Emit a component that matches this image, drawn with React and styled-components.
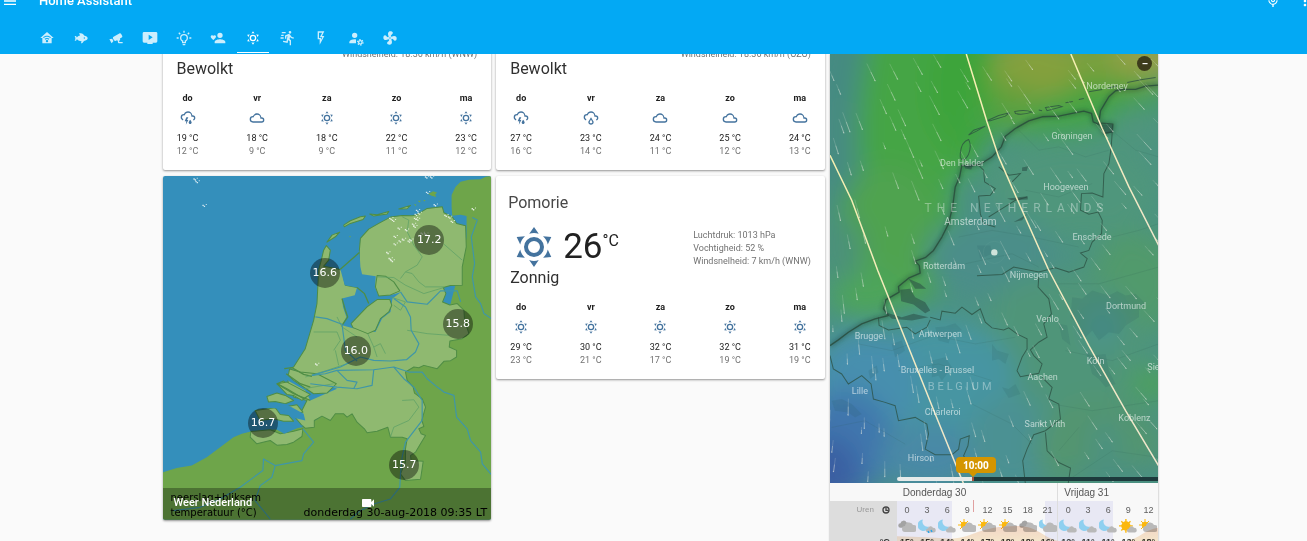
import React from 'react';
import styled, { createGlobalStyle, css } from 'styled-components';
import { MdMenu, MdMicNone, MdMoreVert, MdVideocam } from 'react-icons/md';

const GlobalStyle = createGlobalStyle`
  *, *::before, *::after { box-sizing: border-box; }
  body {
    margin: 0;
    background: #fafafa;
    color: #212121;
    font-family: Roboto, "Liberation Sans", sans-serif;
    font-size: 9px;
  }
`;

/* ---------- icons ---------- */

const CLOUD_TOP =
  'M4.5,13.59C5,13.87 5.14,14.5 4.87,14.96C4.59,15.44 4,15.6 3.5,15.33V15.33C2,14.47 1,12.85 1,11A5,5 0 0,1 6,6C7,3.65 9.3,2 12,2C15.43,2 18.24,4.66 18.5,8.03L19,8A4,4 0 0,1 23,12C23,13.5 22.2,14.77 21,15.46C20.5,15.73 19.91,15.57 19.63,15.09C19.36,14.61 19.5,14 20,13.72V13.73C20.6,13.39 21,12.74 21,12A2,2 0 0,0 19,10H17V9A5,5 0 0,0 12,4C9.5,4 7.45,5.82 7.06,8.19C6.73,8.07 6.37,8 6,8A3,3 0 0,0 3,11C3,12.11 3.6,13.08 4.5,13.59';

const ICONS = {
  sunny:
    'M12,7A5,5 0 0,1 17,12A5,5 0 0,1 12,17A5,5 0 0,1 7,12A5,5 0 0,1 12,7M12,9A3,3 0 0,0 9,12A3,3 0 0,0 12,15A3,3 0 0,0 15,12A3,3 0 0,0 12,9M12,2L14.39,5.42C13.65,5.15 12.84,5 12,5C11.16,5 10.35,5.15 9.61,5.42L12,2M3.34,7L7.5,6.65C6.9,7.16 6.36,7.78 5.94,8.5C5.5,9.24 5.25,10 5.11,10.79L3.34,7M3.36,17L5.12,13.23C5.26,14 5.53,14.78 5.95,15.5C6.37,16.24 6.91,16.86 7.5,17.37L3.36,17M20.65,7L18.88,10.79C18.74,10 18.47,9.23 18.05,8.5C17.63,7.78 17.1,7.15 16.5,6.64L20.65,7M20.64,17L16.5,17.36C17.09,16.85 17.62,16.22 18.04,15.5C18.46,14.77 18.73,14 18.87,13.21L20.64,17M12,22L9.59,18.56C10.33,18.83 11.14,19 12,19C12.82,19 13.63,18.83 14.37,18.56L12,22Z',
  cloudy:
    'M6,19A5,5 0 0,1 1,14A5,5 0 0,1 6,9C7,6.65 9.3,5 12,5C15.43,5 18.24,7.66 18.5,11.03L19,11A4,4 0 0,1 23,15A4,4 0 0,1 19,19H6M19,13H17V12A5,5 0 0,0 12,7C9.5,7 7.45,8.82 7.06,11.19C6.73,11.07 6.37,11 6,11A3,3 0 0,0 3,14A3,3 0 0,0 6,17H19A2,2 0 0,0 21,15A2,2 0 0,0 19,13Z',
  storm:
    CLOUD_TOP +
    'M9.5,11H12.5L10.5,15H12.5L8.75,22L9.5,17H7L9.5,11M17.5,18.67C17.5,19.96 16.5,21 15.25,21C14,21 13,19.96 13,18.67C13,17.12 15.25,14.5 15.25,14.5C15.25,14.5 17.5,17.12 17.5,18.67Z',
  rainy:
    CLOUD_TOP +
    'M14.83,15.67C16.39,17.23 16.39,19.5 14.83,21.08C14.05,21.86 13,22 12,22C11,22 9.95,21.86 9.17,21.08C7.61,19.5 7.61,17.23 9.17,15.67L12,11L14.83,15.67M13.41,16.69L12,14.25L10.59,16.69C9.8,17.5 9.8,18.7 10.59,19.5C11,19.93 11.5,20 12,20C12.5,20 13,19.93 13.41,19.5C14.2,18.7 14.2,17.5 13.41,16.69Z',
  home:
    'M12,3L2,12H5V20H19V12H22L12,3M12,8.5C14.34,8.5 16.46,9.43 18,10.94L16.8,12.12C15.58,10.91 13.88,10.17 12,10.17C10.12,10.17 8.42,10.91 7.2,12.12L6,10.94C7.54,9.43 9.66,8.5 12,8.5M12,11.83C13.4,11.83 14.67,12.39 15.6,13.3L14.4,14.47C13.79,13.87 12.94,13.5 12,13.5C11.06,13.5 10.21,13.87 9.6,14.47L8.4,13.3C9.33,12.39 10.6,11.83 12,11.83M12,15.17C12.94,15.17 13.7,15.91 13.7,16.83C13.7,17.75 12.94,18.5 12,18.5C11.06,18.5 10.3,17.75 10.3,16.83C10.3,15.91 11.06,15.17 12,15.17Z',
  fish:
    'M12,20L12.76,17C9.5,16.79 6.59,15.4 5.75,13.58C5.66,14.06 5.53,14.5 5.33,14.83C4.67,16 3.33,16 2,16C3.1,16 3.5,14.43 3.5,12.5C3.5,10.57 3.1,9 2,9C3.33,9 4.67,9 5.33,10.17C5.53,10.5 5.66,10.94 5.75,11.42C6.4,10 8.32,8.85 10.66,8.32L9,5C11,5 13,5 14.33,5.67C15.46,6.23 16.11,7.27 16.69,8.38C19.61,9.08 22,10.66 22,12.5C22,14.38 19.5,16 16.5,16.66C15.67,17.76 14.86,18.78 14.17,19.33C13.33,20 12.67,20 12,20M17,11A1,1 0 0,0 16,12A1,1 0 0,0 17,13A1,1 0 0,0 18,12A1,1 0 0,0 17,11Z',
  cctv:
    'M18.15,4.94C17.77,4.91 17.37,5 17,5.2L8.35,10.2C7.39,10.76 7.07,12 7.62,12.94L9.12,15.53C9.67,16.5 10.89,16.82 11.85,16.27L13.65,15.23C13.92,15.69 14.32,16.06 14.81,16.27V18.04C14.81,19.13 15.7,20 16.81,20H22V18.04H16.81V16.27C17.72,15.87 18.31,14.97 18.31,14C18.31,13.54 18.19,13.11 17.97,12.73L20.5,11.27C21.47,10.71 21.8,9.5 21.24,8.53L19.74,5.94C19.4,5.34 18.79,5 18.15,4.94M6.22,13.17L2,13.87L2.75,15.17L4.75,18.63L5.5,19.93L8.22,16.63L6.22,13.17Z',
  tv:
    'M21,3H3C1.89,3 1,3.89 1,5V17A2,2 0 0,0 3,19H8V21H16V19H21A2,2 0 0,0 23,17V5A2,2 0 0,0 21,3M16,11L10,15V7Z',
  bulb:
    'M20,11H23V13H20V11M1,11H4V13H1V11M13,1V4H11V1H13M4.92,3.5L7.05,5.64L5.63,7.05L3.5,4.93L4.92,3.5M16.95,5.63L19.07,3.5L20.5,4.93L18.37,7.05L16.95,5.63M12,6A6,6 0 0,1 18,12C18,14.22 16.79,16.16 15,17.2V19A1,1 0 0,1 14,20H10A1,1 0 0,1 9,19V17.2C7.21,16.16 6,14.22 6,12A6,6 0 0,1 12,6M14,21V22A1,1 0 0,1 13,23H11A1,1 0 0,1 10,22V21H14M11,18H13V15.87C14.73,15.43 16,13.86 16,12A4,4 0 0,0 12,8A4,4 0 0,0 8,12C8,13.86 9.27,15.43 11,15.87V18Z',
  heart:
    'M15,14C12.3,14 7,15.3 7,18V20H23V18C23,15.3 17.7,14 15,14M15,12A4,4 0 0,0 19,8A4,4 0 0,0 15,4A4,4 0 0,0 11,8A4,4 0 0,0 15,12M5,15L4.4,14.5C2.4,12.6 1,11.4 1,9.9C1,8.7 2,7.7 3.2,7.7C3.9,7.7 4.6,8 5,8.5C5.4,8 6.1,7.7 6.8,7.7C8,7.7 9,8.6 9,9.9C9,11.4 7.6,12.6 5.6,14.5L5,15Z',
  run:
    'M16.5,5.5A2,2 0 0,0 18.5,3.5A2,2 0 0,0 16.5,1.5A2,2 0 0,0 14.5,3.5A2,2 0 0,0 16.5,5.5M12.9,19.4L13.9,15L16,17V23H18V15.5L15.9,13.5L16.5,10.5C17.89,12.09 19.89,13 22,13V11C20.24,11.03 18.6,10.11 17.7,8.6L16.7,7C16.34,6.4 15.7,6 15,6C14.7,6 14.5,6.1 14.2,6.1L9,8.3V13H11V9.6L12.8,8.9L11.2,17L6.3,16L5.9,18L12.9,19.4M4,9A1,1 0 0,1 3,8A1,1 0 0,1 4,7H7V9H4M5,5A1,1 0 0,1 4,4A1,1 0 0,1 5,3H10V5H5M3,13A1,1 0 0,1 2,12A1,1 0 0,1 3,11H7V13H3Z',
  flash: 'M7,2H17L13.5,9H17L10,22V14H7V2M9,4V12H12V14.66L14,11H10.24L13.76,4H9Z',
  account:
    'M10,4A4,4 0 0,0 6,8A4,4 0 0,0 10,12A4,4 0 0,0 14,8A4,4 0 0,0 10,4M10,14C5.58,14 2,15.79 2,18V20H12V14.1C11.4,14 10.6,14 10,14Z',
  fan:
    'M12,11A1,1 0 0,0 11,12A1,1 0 0,0 12,13A1,1 0 0,0 13,12A1,1 0 0,0 12,11M12.5,2C17,2 17.11,5.57 14.75,6.75C13.76,7.24 13.32,8.29 13.13,9.22C13.61,9.42 14.03,9.73 14.35,10.13C18.05,8.13 22.03,8.92 22.03,12.5C22.03,17 18.46,17.1 17.28,14.73C16.78,13.74 15.72,13.3 14.79,13.11C14.59,13.59 14.28,14 13.88,14.34C15.87,18.03 15.08,22 11.5,22C7,22 6.91,18.42 9.27,17.24C10.25,16.75 10.69,15.71 10.89,14.79C10.4,14.59 9.97,14.27 9.65,13.87C5.96,15.85 2,15.07 2,11.5C2,7 5.56,6.89 6.74,9.26C7.24,10.25 8.29,10.68 9.22,10.87C9.41,10.39 9.73,9.97 10.14,9.65C8.15,5.96 8.94,2 12.5,2Z',
};

const Glyph = styled.svg`
  display: block;
  flex: none;
  width: ${(p) => p.$size}px;
  height: ${(p) => p.$size}px;
  fill: currentColor;
`;

function Icon({ name, size = 16 }) {
  return (
    <Glyph viewBox="0 0 24 24" $size={size} aria-hidden="true">
      <path d={ICONS[name]} fillRule="evenodd" />
      {name === 'account' && (
        <g fill="none" stroke="currentColor">
          <circle cx="18.5" cy="18.5" r="5.4" stroke="#03a9f4" strokeWidth="2" />
          <circle cx="18.5" cy="18.5" r="2.6" strokeWidth="2" />
          <circle cx="18.5" cy="18.5" r="4.2" strokeWidth="1.6" strokeDasharray="2.2 2.2" />
        </g>
      )}
    </Glyph>
  );
}

/* ---------- header ---------- */

const Page = styled.div`
  display: flex;
  flex-direction: column;
  height: 100vh;
  overflow: hidden;
`;

const Header = styled.header`
  position: relative;
  z-index: 2;
  flex: none;
  padding-bottom: 1px;
  background: #03a9f4;
  color: #fff;
  overflow: hidden;
`;

const Toolbar = styled.div`
  display: flex;
  align-items: center;
  height: 42px;
  margin-top: -20px;
  padding-left: 2px;
`;

const Title = styled.h1`
  flex: 1;
  margin: 0 0 0 21px;
  font-size: 13px;
  font-weight: 500;
  line-height: 20px;
`;

const ToolButton = styled.button`
  display: flex;
  margin: 0;
  padding: 0;
  border: 0;
  background: none;
  color: inherit;
  font-size: 16px;
  cursor: pointer;
`;

const ToolActions = styled.div`
  display: flex;
  gap: 16px;
  margin-right: -6px;
`;

const Tabs = styled.nav`
  display: flex;
  justify-content: space-between;
  width: 375px;
  margin-left: 31px;
`;

const Tab = styled.a`
  display: flex;
  align-items: center;
  justify-content: center;
  width: 32px;
  height: 31px;
  padding-top: 2px;
  border-bottom: 1px solid ${(p) => (p.$active ? '#fff' : 'transparent')};
  color: ${(p) => (p.$active ? '#fff' : 'rgba(255, 255, 255, 0.8)')};
`;

/* ---------- card grid ---------- */

const Main = styled.main`
  flex: 1;
  min-height: 0;
  overflow: hidden;
`;

const Columns = styled.div`
  display: grid;
  grid-template-columns: repeat(3, minmax(0, 1fr));
  align-items: start;
  gap: 5px;
  max-width: 1010px;
  margin: 0 auto;
  padding-left: 14px;
`;

const Column = styled.div`
  display: flex;
  flex-direction: column;
  gap: 6px;
  margin-top: ${(p) => (p.$scrolled ? '-11px' : '0')};
`;

const cardLook = css`
  background: #fff;
  border-radius: 2px;
  box-shadow: 0 1px 2px rgba(0, 0, 0, 0.3), 0 1px 3px rgba(0, 0, 0, 0.14);
`;

const Card = styled.section`
  ${cardLook}
  padding: ${(p) => (p.$named ? '11px' : '3px')} 14px 12px;
`;

const Place = styled.h2`
  margin: 0 -2px 5px;
  color: #484848;
  font-size: 16px;
  font-weight: 400;
  line-height: 32px;
`;

const Now = styled.div`
  display: flex;
  align-items: center;
  justify-content: flex-end;
  height: ${(p) => (p.$full ? '45px' : '14px')};
`;

const NowIcon = styled.span`
  color: #44739e;
`;

const NowTemp = styled.div`
  display: flex;
  flex: 1;
  margin-left: 5px;
  font-size: 35px;
  line-height: 44px;
`;

const Unit = styled.span`
  font-size: 16px;
  line-height: 32px;
`;

const Attributes = styled.div`
  padding-top: 3px;
  color: #727272;
  font-size: 9px;
  line-height: 13px;
`;

const Condition = styled.div`
  margin-bottom: 14px;
  font-size: 16px;
  line-height: 18px;
  color: #303030;
`;

const Forecast = styled.div`
  display: flex;
  justify-content: space-between;
`;

const Day = styled.div`
  display: flex;
  flex-direction: column;
  align-items: center;
  width: 22px;
  font-size: 9px;
  line-height: 13px;
  white-space: nowrap;
`;

const DayName = styled.span`
  font-weight: 700;
`;

const DayIcon = styled.span`
  margin: 5px 0 6px;
  color: #44739e;
`;

const Low = styled.span`
  color: #727272;
`;

const DAYS = ['do', 'vr', 'za', 'zo', 'ma'];

function WeatherCard({ place, temp, attributes, condition, forecast }) {
  return (
    <Card $named={Boolean(place)}>
      {place && <Place>{place}</Place>}
      <Now $full={Boolean(place)}>
        {temp && (
          <>
            <NowIcon><Icon name="sunny" size={48} /></NowIcon>
            <NowTemp>{temp}<Unit>°C</Unit></NowTemp>
          </>
        )}
        <Attributes>
          {attributes.map((line) => <div key={line}>{line}</div>)}
        </Attributes>
      </Now>
      <Condition>{condition}</Condition>
      <Forecast>
        {forecast.map(([icon, high, low], i) => (
          <Day key={DAYS[i]}>
            <DayName>{DAYS[i]}</DayName>
            <DayIcon><Icon name={icon} /></DayIcon>
            <span>{high} °C</span>
            <Low>{low} °C</Low>
          </Day>
        ))}
      </Forecast>
    </Card>
  );
}

/* ---------- camera card ---------- */

const Camera = styled.section`
  ${cardLook}
  position: relative;
  overflow: hidden;
  font-family: "DejaVu Sans", sans-serif;
`;

const Drawing = styled.svg`
  display: block;
  width: 100%;
  height: auto;
`;

const Pin = styled.span`
  position: absolute;
  left: ${(p) => p.$x}%;
  top: ${(p) => p.$y}%;
  width: 30px;
  height: 30px;
  border-radius: 50%;
  background: rgba(0, 0, 0, 0.4);
  color: #fff;
  font-size: 11px;
  line-height: 30px;
  text-align: center;
  transform: translate(-50%, -50%);
`;

const Legend = styled.div`
  position: absolute;
  left: 8px;
  right: 4px;
  bottom: 0;
  display: flex;
  align-items: flex-end;
  justify-content: space-between;
  color: #000;
  font-size: 10px;
  line-height: 15px;
`;

const Stamp = styled.div`
  font-size: 11px;
`;

const CameraFooter = styled.div`
  position: absolute;
  left: 0;
  right: 0;
  bottom: 0;
  display: flex;
  align-items: center;
  height: 32px;
  padding: 0 11px 2px;
  background: rgba(0, 0, 0, 0.3);
  color: #fff;
  font-family: Roboto, sans-serif;
  font-size: 11px;
  font-weight: 500;
`;

const CameraName = styled.span`
  flex: 1;
`;

const CameraIcon = styled.span`
  display: flex;
  flex: 1;
  margin-left: 66px;
  font-size: 16px;
`;

const PINS = [
  ['17.2', 808, 209],
  ['16.6', 495, 307],
  ['15.8', 893, 460],
  ['16.0', 588, 542],
  ['16.7', 310, 757],
  ['15.7', 733, 884],
];

const SPECKS = [
  [104, 28], [110, 36], [131, 107], [770, 122], [775, 130], [766, 134], [764, 146], [770, 148], [758, 163],
  [762, 170], [690, 146], [698, 152], [737, 180], [715, 175], [703, 200], [718, 213], [728, 208], [745, 214],
  [750, 210], [703, 222], [681, 248], [688, 266], [694, 272], [800, 68], [797, 22], [812, 22], [855, 137],
  [866, 142], [874, 155], [823, 105], [937, 117], [784, 190], [795, 192], [468, 582],
];

function NetherlandsMap() {
  return (
    <Drawing viewBox="9 18 984 1029" aria-hidden="true">
      <rect x="9" y="18" width="984" height="1029" fill="#348fbb" />
      <path
        fill="#6ea54a"
        d="M9,905 L50,892 95,885 140,860 180,830 220,800 245,790 272,783 L430,770 820,540 870,400 912,240 918,200 918,138 900,134 875,137 873,110 873,75 885,50 900,35 925,29 960,28 975,20 993,18 V1047 H9Z"
      />
      <g fill="#8fb970" stroke="#4f8d45" strokeWidth="3" strokeLinejoin="round">
        <path d="M597,240 L600,205 625,177 655,160 690,141 725,136 755,137 770,133 800,115 845,110 850,128 875,140 888,160 915,167 917,230 905,290 905,345 870,346 848,352 856,370 846,395 868,404 890,400 910,420 912,450 925,490 905,505 868,512 866,530 888,540 888,560 870,571 850,573 830,595 790,585 775,592 760,590 735,605 740,630 758,650 762,668 785,685 795,710 784,750 790,768 775,775 782,790 795,795 780,820 765,845 750,855 752,870 788,872 784,900 780,926 735,930 720,910 735,875 735,835 740,805 725,800 690,800 682,770 650,782 620,787 612,775 590,755 575,730 560,740 550,730 525,730 510,750 485,737 462,750 462,770 435,773 425,765 400,735 425,720 440,690 400,680 385,640 375,600 400,590 435,535 460,450 470,400 475,300 483,270 490,240 498,226 510,240 505,270 490,288 530,296 545,300 555,345 590,352 597,300 Z" />
        <path d="M350,640 L370,632 400,655 440,678 425,690 400,675 380,672Z" />
        <path d="M320,678 L350,668 375,675 400,690 375,700 345,693 325,695Z" />
        <path d="M380,708 L410,703 428,725 400,728Z" />
        <path d="M285,720 L345,712 360,732 385,735 400,752 370,752 340,745 300,750Z" />
        <path d="M272,783 L330,778 360,790 400,782 428,775 425,798 400,815 380,822 350,824 330,810 290,820 270,800Z" />
        <path d="M550,165 L570,152 600,140 615,138 608,148 570,160 552,170Z M628,132 L650,134 685,124 680,132 640,138Z M500,216 L515,195 538,186 525,200Z M715,117 L750,106 740,116Z" />
      </g>
      <path fill="#6ea54a" d="M803,72 l15,-8 12,4 -6,5 3,8 -14,-4z M760,102 l8,2 -3,4z M772,92 l10,0 -6,5z M788,90l7,0-3,4z M566,198l6,1-3,3z" />
      <g fill="#348fbb">
        <path d="M597,240 L540,297 553,345 590,352 583,375 545,385 548,410 558,440 545,465 575,473 610,480 645,485 665,445 690,425 696,385 722,365 700,372 655,376 644,350 646,318 605,312 600,290Z" />
        <path d="M383,590 L440,615 530,655 450,690 435,660 400,640 378,628 372,600Z" />
        <path d="M330,700 L375,700 430,730 435,750 400,742 360,715 330,712Z" />
        <path d="M345,775 L372,757 400,765 430,765 400,778 372,790Z" />
      </g>
      <g fill="#8fb970" stroke="#4f8d45" strokeWidth="3" strokeLinejoin="round">
        <path d="M572,460 L620,410 650,388 688,388 694,405 685,425 660,445 645,480 622,490 578,472Z" />
        <path d="M650,316 L675,318 700,335 718,362 690,374 655,377 645,350Z" />
        <path d="M388,596 L420,605 470,610 528,640 500,668 460,670 400,630 384,615Z" />
        <path d="M352,640 L380,635 450,672 430,685 380,655Z" />
      </g>
      <g fill="none" stroke="#4f8d45" strokeWidth="4">
        <path d="M540,297 L597,247 M590,352 L612,370 625,400 M545,385 L555,420 562,440 545,465" />
        <path d="M372,595 L395,592 430,612 455,618 M378,610 L420,640 450,650 M350,640 L400,670 450,690" />
      </g>
      <g fill="none" stroke="#5a9f66" strokeWidth="2.5" opacity="0.85">
        <path d="M725,140 L745,150 740,185 760,225 785,260 770,285 735,305 720,325 M850,222 L905,270 M735,305 L755,310 775,335 795,350 850,350" />
        <path d="M650,320 L700,322 735,345 790,370 850,352 M460,485 L530,485 540,510 520,540 M530,440 L545,470 590,500 M622,490 L640,530 650,560 M740,480 L800,490 865,495" />
        <path d="M435,620 L500,600 560,580 M725,690 L760,688 775,710 745,750 700,770 690,800 M640,530 L660,520 675,550 M430,655 L520,640 M525,540 L535,585" />
        <path d="M690,380 L735,395 720,420 700,405" />
      </g>
      <g fill="none" stroke="#3f96a8" strokeWidth="3.5" strokeLinejoin="round">
        <path d="M720,365 L740,395 800,402 840,362 890,362 900,395 M700,385 L735,410 750,440 752,480 775,520 765,545 738,568 690,572 640,570 600,560 540,590 455,615" />
        <path d="M465,440 L500,445 545,462 550,500 555,540 590,572" />
        <path d="M455,615 L495,610 530,600 640,598 700,590 745,605 785,605 800,625 830,650 850,665 880,675 888,740 920,775 930,810 960,845 965,880 992,912" />
        <path d="M450,640 L530,650 590,655 635,645 640,598 M530,600 L560,630 590,635 580,655 M700,590 L730,625 760,650 785,690 785,750 735,815 725,860 720,910 718,950 690,985 640,1000 600,1020 570,1045" />
        <path d="M935,142 L950,150 932,200 942,280 935,320 945,380 960,400 970,430 992,445" />
        <path d="M428,775 L460,815 430,850 425,870 345,885 310,865 308,900 240,950 180,985 120,1010 40,1020 M345,885 L335,920 300,945 285,990 330,1045" />
      </g>
      <g fill="#fff" opacity="0.8">
        {SPECKS.map(([x, y]) => (
          <path key={`${x}-${y}`} d={`M${x - 4},${y - 3} h4 v3 h4 v4 h-4 v-3 h-4z M${x + 6},${y - 5} h3 v3 h-3z`} />
        ))}
      </g>
    </Drawing>
  );
}

function CameraCard() {
  return (
    <Camera>
      <NetherlandsMap />
      {PINS.map(([value, x, y]) => (
        <Pin key={value} $x={((x - 9) / 984) * 100} $y={((y - 18) / 1029) * 100}>{value}</Pin>
      ))}
      <Legend>
        <div>neerslag+bliksem<br />temperatuur (°C)</div>
        <Stamp>donderdag 30-aug-2018 09:35 LT</Stamp>
      </Legend>
      <CameraFooter>
        <CameraName>Weer Nederland</CameraName>
        <CameraIcon><MdVideocam /></CameraIcon>
      </CameraFooter>
    </Camera>
  );
}

/* ---------- wind map ---------- */

const Wind = styled.section`
  background: #f8f8f8;
  box-shadow: 0 0 2px rgba(0, 0, 0, 0.35);
`;

const MapArea = styled.div`
  position: relative;
  overflow: hidden;
`;

const MapLabel = styled.span`
  position: absolute;
  left: ${(p) => p.$x}%;
  top: ${(p) => p.$y}%;
  color: rgba(255, 255, 255, ${(p) => (p.$country ? 0.36 : 0.6)});
  font-size: ${(p) => p.$size}px;
  letter-spacing: ${(p) => (p.$country ? `${p.$country}px` : 'normal')};
  line-height: 12px;
  white-space: nowrap;
  transform: translate(-50%, -50%);
`;

const ZoomOut = styled.button`
  position: absolute;
  top: 2px;
  right: 6px;
  width: 15px;
  height: 15px;
  padding: 0;
  border: 0;
  border-radius: 50%;
  background: #3d3c1c;
  color: #fff;
  font-size: 10px;
  font-weight: 700;
  line-height: 15px;
`;

const TimeSlider = styled.input`
  position: absolute;
  left: 67px;
  right: 0;
  bottom: 2px;
  width: calc(100% - 67px);
  height: 4px;
  margin: 0;
  appearance: none;
  border-radius: 2px 0 0 2px;
  background: linear-gradient(to right, #e6ebea 29%, #1d3a3c 29%);

  &::-webkit-slider-thumb {
    appearance: none;
    width: 2px;
    height: 4px;
    background: #a8503c;
  }
`;

const TimeBubble = styled.output`
  position: absolute;
  left: 126px;
  bottom: 10px;
  width: 40px;
  border-radius: 4px;
  background: #d49500;
  color: #fff;
  font-family: "Open Sans", sans-serif;
  font-size: 10px;
  font-weight: 700;
  line-height: 16px;
  text-align: center;

  &::after {
    content: "";
    position: absolute;
    top: 16px;
    left: 13px;
    border: 4px solid transparent;
    border-top-color: #d49500;
    border-bottom: 0;
  }
`;

const LABELS = [
  ['Norderney', 845, 109, 9], ['Groningen', 740, 258, 9], ['Den Helder', 411, 337, 9],
  ['Hoogeveen', 722, 409, 9], ['Amsterdam', 436, 514, 10], ['Enschede', 800, 560, 9],
  ['Rotterdam', 357, 647, 9], ['Nijmegen', 611, 673, 9], ['Dortmund', 902, 766, 9],
  ['Venlo', 667, 806, 9], ['Brugge', 132, 856, 9], ['Antwerpen', 346, 851, 9],
  ['Köln', 811, 932, 9], ['Bruxelles - Brussel', 337, 959, 9], ['Aachen', 652, 979, 9],
  ['Lille', 105, 1020, 9], ['Charleroi', 353, 1083, 9], ['Koblenz', 927, 1101, 9],
  ['Sankt Vith', 659, 1121, 9], ['Hirson', 288, 1223, 9], ['Sie', 984, 950, 9],
  ['THE NETHERLANDS', 574, 474, 12, 5], ['BELGIUM', 408, 1008, 11, 3],
];

/* Wind streaks on a jittered lattice; they steepen towards the south-west. */
const STREAKS = (() => {
  let seed = 7;
  const rand = () => {
    seed = (seed * 16807) % 2147483647;
    return seed / 2147483647;
  };
  const list = [];
  for (let row = 0; row < 21; row += 1) {
    for (let col = 0; col < 15; col += 1) {
      const x = 15 + col * 67 + rand() * 60;
      const y = 12 + row * 62 + rand() * 56;
      const show = rand() < 0.74;
      const across = (x - 15) / 984;
      const down = (y - 12) / 1287;
      const angle = 1.15 - across * 0.35 + down * (1 - across) * 0.6;
      const length = (20 + rand() * 48) * (1 - down * 0.25);
      if (show) list.push([x, y, x + Math.cos(angle) * length, y + Math.sin(angle) * length]);
    }
  }
  return list;
})();

const COLOUR_BLOBS = [
  [60, 250, 110, 420, '#478b82'], [100, 40, 100, 120, '#458a82'], [280, 250, 180, 500, '#45a544'],
  [190, 560, 160, 220, '#50a350'], [420, 110, 110, 200, '#3da43a'], [720, 90, 240, 110, '#5ca23c'],
  [900, 20, 200, 80, '#78a03e'], [630, 50, 130, 110, '#84a03e'], [970, 15, 110, 60, '#96a048'],
  [800, 165, 180, 40, '#3fa33c'], [660, 205, 240, 50, '#45a34a'], [560, 160, 60, 60, '#5fa03c'],
  [900, 140, 140, 30, '#3fa23f'], [940, 230, 90, 70, '#4f957d'], [740, 420, 270, 150, '#4f967b'],
  [430, 440, 50, 70, '#4b8f85'], [500, 620, 200, 130, '#4c8e89'], [120, 720, 110, 80, '#4ea55a'],
  [40, 600, 70, 100, '#4b9179'], [930, 700, 140, 160, '#519a6c'], [700, 900, 260, 240, '#4f9579'],
  [350, 980, 220, 170, '#4795a2'], [120, 1000, 160, 160, '#468fae'], [60, 1180, 140, 160, '#4176ad'],
  [10, 1270, 90, 110, '#3b5fa2'], [310, 1220, 150, 100, '#4889a6'], [560, 1180, 130, 150, '#4b9193'],
  [820, 1190, 190, 150, '#52956f'], [980, 1000, 70, 50, '#4ea05c'], [880, 1280, 160, 40, '#498e83'],
  [830, 830, 40, 70, '#4a9190'], [840, 1170, 40, 60, '#4b9085'],
];

function WindDrawing() {
  return (
    <Drawing viewBox="15 12 984 1285" aria-hidden="true">
      <defs>
        <filter id="field" x="-50%" y="-50%" width="200%" height="200%">
          <feGaussianBlur stdDeviation="38" />
        </filter>
        <filter id="coastShade"><feGaussianBlur stdDeviation="7" /></filter>
        <linearGradient id="front" x1="0" y1="0" x2="0" y2="1">
          <stop offset="0" stopColor="#f6f0b0" />
          <stop offset="1" stopColor="#efe6cc" />
        </linearGradient>
      </defs>
      <rect x="15" y="12" width="984" height="1287" fill="#4b9282" />
      <g filter="url(#field)">
        {COLOUR_BLOBS.map(([x, y, rx, ry, fill]) => (
          <ellipse key={`${x}-${y}`} cx={x} cy={y} rx={rx} ry={ry} fill={fill} />
        ))}
      </g>
      {['shade', 'line'].map((kind) => (
        <path
          key={kind}
          fill="none"
          stroke={kind === 'shade' ? '#16382c' : '#284a3a'}
          strokeWidth={kind === 'shade' ? 12 : 4}
          opacity={kind === 'shade' ? 0.35 : 0.8}
          filter={kind === 'shade' ? 'url(#coastShade)' : undefined}
          strokeLinejoin="round"
          d="M999,105 L960,108 930,118 895,118 870,122 850,140 838,160 825,182 820,218 862,222 860,245 835,250 825,225 803,215 798,190 775,183 740,190 700,198 650,200 610,212 570,235 540,258 528,290 500,320 468,340 430,350 410,345 403,380 390,410 382,470 370,520 350,560 325,600 300,622 270,632 282,645 285,668 252,682 220,708 222,725 182,748 175,775 190,795 150,805 110,820 70,845 40,868 15,885"
        />
      ))}
      <g fill="none" stroke="#2b4f41" strokeWidth="3" opacity="0.75">
        <path d="M405,310 Q408,275 430,268 Q440,285 430,312 Q415,340 405,322Z M430,255 L445,240 480,228 455,242Z M485,212 L520,196 552,188 540,198 495,212Z M568,184 Q600,178 620,186 Q590,196 570,190Z M640,180l10,2 M660,172 L700,166 710,170 665,182Z M720,158l22,-4 M760,148 L775,145 M790,125 L830,118 M845,115l30,-8 M905,97 L950,88 990,82" />
        <path d="M860,245 L857,290 850,340 835,370 832,440 800,428 768,430 765,480 790,492 818,485 830,510 828,550 800,575 790,600 765,608 785,625 775,650 730,665 690,652 640,665 565,650 530,672 455,676" />
        <path d="M640,680 L638,710 670,745 678,790 655,820 665,860 640,875 615,898 625,915 650,940 640,968 585,978 575,960 590,920 605,895 605,865 575,850 550,832 535,838 500,832 480,815 465,775 440,792 410,770 390,788 350,782 345,808 315,800" />
        <path d="M160,800 L162,825 190,838 245,830 270,850 305,830 315,808 M650,980 L680,1010 670,1045 700,1060 705,1105 660,1140 625,1152 605,1195 592,1230 600,1299 M660,1145 L665,1200 700,1235 735,1252 728,1299" />
        <path d="M15,915 L25,955 50,970 70,1000 110,975 138,1000 145,1045 180,1055 210,1065 220,1110 270,1100 305,1120 310,1150 300,1195 330,1212 380,1212 400,1195 405,1165 432,1155 428,1185 415,1215 430,1240" />
        <path d="M455,340 L475,360 478,395 510,415 495,435 460,437 M520,350 L550,375 585,370 560,395 M460,437 L465,490 475,520 510,530 M605,440 L570,450 530,475 490,500" />
      </g>
      <g fill="#2a4d45" opacity="0.55">
        <path d="M225,718 L255,715 270,740 300,755 315,780 300,788 265,762 228,752Z M180,785 L230,800 265,790 310,800 260,810 200,805Z M250,685 L285,700 303,715 270,715Z M415,345 L445,340 438,358 420,355Z M590,352 l18,-4 -4,14 -14,0z M545,445 L607,438 607,448 560,450Z M822,222 L862,224 860,248 840,250Z M565,515 L605,492 590,510Z" />
      </g>
      <g fill="#2c5d62" opacity="0.16">
        <path d="M740,740 L770,745 800,720 850,735 875,722 900,735 930,730 960,760 940,780 940,800 900,825 880,850 850,845 820,870 800,840 780,860 760,850 755,820 735,800Z M780,900 L800,915 840,910 850,960 870,1000 840,1010 820,985 800,970Z M320,930 l20,-5 20,-5 20,30 -30,40 -10,-15 -20,5z M330,830 l30,-2 30,-10 20,20 -30,10 -10,30 -30,-8z M500,880 l15,20 35,10 -10,30 -20,-15 -20,5z M530,1010 l20,5 20,-15 15,30 -35,12z M20,1050 L50,1045 80,1060 110,1090 90,1100 70,1085 30,1080Z M200,880 l30,-10 10,30 -30,20z M130,960 l25,-15 5,20 -25,20z M455,585 l40,0 5,25 -35,15z M700,820l25,5 10,60 -25,-20z" />
      </g>
      <g fill="none" stroke="#2c5d55" strokeWidth="2" opacity="0.2" strokeLinejoin="round">
        <path d="M580,240 L640,300 700,290 780,320 850,300 M600,420 L700,440 800,400 M870,250 L930,300 999,320 M860,560 L940,540 999,520 M400,560 L500,540 620,560 760,590 M420,640 L560,610 640,650 M350,860 L450,880 570,860 M220,960 L340,940 500,990 M100,880 L200,900 340,850 M720,900 L860,930 999,880 M680,1060 L800,1080 999,1050 M440,1060 L560,1120 620,1180 M740,1280 L860,1200 999,1220 M20,1130 L120,1110 240,1180 M690,700 L820,700 999,650 M700,1200 L760,1130" />
      </g>
      <g stroke="#e4e9e0" strokeLinecap="round">
        {STREAKS.map(([x1, y1, x2, y2]) => (
          <g key={`${x1}-${y1}`}>
            <line x1={x1} y1={y1} x2={x2} y2={y2} strokeWidth="2" opacity="0.28" />
            <line x1={(x1 + x2) / 2} y1={(y1 + y2) / 2} x2={x2} y2={y2} strokeWidth="2.5" opacity="0.4" />
            <line x1={x2 - 1} y1={y2 - 1} x2={x2} y2={y2} strokeWidth="3.5" opacity="0.4" />
          </g>
        ))}
      </g>
      <g fill="none" stroke="url(#front)" strokeWidth="4.5">
        <path d="M15,315 L80,450 158,660 230,840 330,1090 415,1299" />
        <path d="M423,12 L485,215 520,320 590,480 668,655 790,885 900,1080 999,1245" />
        <path d="M736,12 L830,235 910,410 999,585" />
      </g>
      <circle cx="507" cy="606" r="9.5" fill="#cfe3da" />
      <circle cx="507" cy="606" r="33" fill="none" stroke="#6aa59a" strokeWidth="2" opacity="0.3" />
    </Drawing>
  );
}

/* ---------- hourly table ---------- */

const TableArea = styled.div`
  position: relative;
`;

const HourTable = styled.table`
  width: 100%;
  border-collapse: collapse;
  border-spacing: 0;
  table-layout: fixed;
  color: #606060;
  font-family: "Liberation Sans", sans-serif;
  font-size: 9px;
  text-align: center;

  th, td { padding: 0; }
`;

const LabelCol = styled.col`
  width: 67px;
`;

const DayHead = styled.th`
  height: 18px;
  border-left: ${(p) => (p.$divided ? '1px solid #ddd' : '0')};
  color: #555;
  font-size: 10px;
  font-weight: 400;
  text-align: left;
  text-indent: 6px;
`;

const RowLabel = styled.th`
  height: ${(p) => p.$h}px;
  background: #ddd;
  color: ${(p) => (p.$strong ? '#333' : '#999')};
  font-size: ${(p) => (p.$strong ? '9px' : '8px')};
  font-weight: ${(p) => (p.$strong ? 700 : 400)};
`;

const LabelInner = styled.span`
  display: flex;
  align-items: center;
  justify-content: flex-end;
  gap: 8px;
  padding-right: 7px;
`;

const NIGHTS = {
  all: '#e8e8f4',
  start: 'linear-gradient(to right, #e8e8f4 75%, transparent 75%)',
  end: 'linear-gradient(to right, transparent 35%, #e8e8f4 35%)',
};

const HourCell = styled.td`
  background: ${(p) => NIGHTS[p.$night] || 'none'};
  border-left: ${(p) => (p.$divided ? '1px solid #ddd' : '0')};
  color: ${(p) => (p.$strong ? '#333' : 'inherit')};
  font-weight: ${(p) => (p.$strong ? 700 : 400)};
`;

const SkyIcon = styled.svg`
  display: block;
  width: 18px;
  height: 14px;
  margin: 0 auto;
`;

const TempCurve = styled.svg`
  position: absolute;
  left: 67px;
  top: 18px;
  width: calc(100% - 67px);
  height: 40px;
  mix-blend-mode: multiply;
  pointer-events: none;
`;

const NowMark = styled.span`
  position: absolute;
  left: 143px;
  top: 17px;
  width: 1px;
  height: 12px;
  background: #e0a0a0;
`;

const HOURS = [
  [0, 'clouds', 15, 'all'], [3, 'moonRain', 15, 'all'], [6, 'moon', 14, 'start'], [9, 'sunCloud', 14],
  [12, 'sunCloud', 17], [15, 'sunCloud', 18], [18, 'clouds', 18], [21, 'moonCloud', 16, 'end'],
  [0, 'moon', 12, 'all'], [3, 'moon', 11, 'all'], [6, 'moon', 11, 'start'], [9, 'sun', 13], [12, 'sunCloud', 18],
];

const CLOUD = 'M6,13 a3,3 0 0 1 0,-6 a4.2,4.2 0 0 1 8,-1 a3.5,3.5 0 0 1 1,7z';
const RAYS = 'M6,0v12M0,6h12M2,2l8,8M10,2l-8,8';

function Sky({ kind }) {
  const small = kind === 'moon' || kind === 'moonRain' || kind === 'sun';
  return (
    <SkyIcon viewBox="0 0 18 14" aria-hidden="true">
      {kind === 'clouds' && <path d={CLOUD} fill="#a3a3a3" transform="translate(-2 -1) scale(0.75)" />}
      {kind.startsWith('moon') && (
        <path d="M5,0.5 a5,5 0 0 0 6,7 a5.8,5.8 0 1 1 -6,-7z" transform={small ? undefined : 'scale(0.8)'} fill="#8fd0f0" />
      )}
      {kind === 'sunCloud' && (
        <g><path d={RAYS} stroke="#fbb80f" strokeWidth="1" fill="none" /><circle cx="6" cy="6" r="3.2" fill="#fbb80f" /></g>
      )}
      {kind === 'sun' && (
        <g transform="scale(1.15)"><path d={RAYS} stroke="#fbb80f" strokeWidth="1.2" fill="none" /><circle cx="6" cy="6" r="4" fill="#fbb80f" /></g>
      )}
      <path d={CLOUD} fill="#b9b9b9" transform={small ? 'translate(6 5) scale(0.65)' : 'translate(1 0)'} />
      {kind === 'moonRain' && <path d="M10,12l1,2M13,11l1,2" stroke="#22a4ee" strokeWidth="1.4" />}
    </SkyIcon>
  );
}

function HourlyTable() {
  const cell = (h, i) => ({ $night: h[3], $divided: i === 8 });
  return (
    <TableArea>
      <HourTable>
        <colgroup>
          <LabelCol />
          {HOURS.map((h, i) => <col key={i} />)}
        </colgroup>
        <thead>
          <tr>
            <td />
            <DayHead colSpan={8} scope="colgroup">Donderdag 30</DayHead>
            <DayHead colSpan={5} scope="colgroup" $divided>Vrijdag 31</DayHead>
          </tr>
        </thead>
        <tbody>
          <tr>
            <RowLabel $h={17} scope="row">
              <LabelInner>
                Uren
                <Glyph viewBox="0 0 24 24" $size={8} aria-hidden="true">
                  <g fill="none" stroke="#444" strokeWidth="4">
                    <circle cx="12" cy="12" r="9" />
                    <path d="M12,6v7h7" />
                  </g>
                </Glyph>
              </LabelInner>
            </RowLabel>
            {HOURS.map((h, i) => <HourCell key={i} {...cell(h, i)}>{h[0]}</HourCell>)}
          </tr>
          <tr>
            <RowLabel $h={16} />
            {HOURS.map((h, i) => <HourCell key={i} {...cell(h, i)}><Sky kind={h[1]} /></HourCell>)}
          </tr>
          <tr>
            <RowLabel $h={15} $strong scope="row"><LabelInner>°C</LabelInner></RowLabel>
            {HOURS.map((h, i) => <HourCell key={i} {...cell(h, i)} $strong>{h[2]}°</HourCell>)}
          </tr>
        </tbody>
      </HourTable>
      <TempCurve viewBox="217 153 782 120" preserveAspectRatio="none" aria-hidden="true">
        <defs>
          <linearGradient id="warmth" x1="0" y1="0" x2="0" y2="1">
            <stop offset="0" stopColor="#f9dccb" />
            <stop offset="1" stopColor="#fbecd0" />
          </linearGradient>
        </defs>
        <path fill="url(#warmth)" d="M217,259 Q310,262 380,266 C450,262 460,228 580,228 C640,230 650,262 700,273 H900 C940,268 960,236 999,233 V273 H217Z" />
      </TempCurve>
      <NowMark />
    </TableArea>
  );
}

function WindCard() {
  return (
    <Wind>
      <MapArea>
        <WindDrawing />
        {LABELS.map(([name, x, y, size, country]) => (
          <MapLabel key={name} $x={((x - 15) / 984) * 100} $y={((y - 12) / 1285) * 100} $size={size} $country={country}>
            {name}
          </MapLabel>
        ))}
        <ZoomOut type="button" aria-label="Uitzoomen">–</ZoomOut>
        <TimeSlider type="range" min="0" max="100" defaultValue="29" aria-label="Tijd" />
        <TimeBubble>10:00</TimeBubble>
      </MapArea>
      <HourlyTable />
    </Wind>
  );
}

/* ---------- page ---------- */

const TABS = ['home', 'fish', 'cctv', 'tv', 'bulb', 'heart', 'sunny', 'run', 'flash', 'account', 'fan'];

export default function App() {
  return (
    <Page>
      <GlobalStyle />
      <Header>
        <Toolbar>
          <ToolButton type="button" aria-label="Menu"><MdMenu /></ToolButton>
          <Title>Home Assistant</Title>
          <ToolActions>
            <ToolButton type="button" aria-label="Spraak"><MdMicNone /></ToolButton>
            <ToolButton type="button" aria-label="Meer"><MdMoreVert /></ToolButton>
          </ToolActions>
        </Toolbar>
        <Tabs>
          {TABS.map((name) => (
            <Tab key={name} href={`#${name}`} aria-label={name} $active={name === 'sunny'}>
              <Icon name={name} />
            </Tab>
          ))}
        </Tabs>
      </Header>
      <Main>
        <Columns>
          <Column $scrolled>
            <WeatherCard
              attributes={['Windsnelheid: 18.36 km/h (WNW)']}
              condition="Bewolkt"
              forecast={[['storm', 19, 12], ['cloudy', 18, 9], ['sunny', 18, 9], ['sunny', 22, 11], ['sunny', 23, 12]]}
            />
            <CameraCard />
          </Column>
          <Column $scrolled>
            <WeatherCard
              attributes={['Windsnelheid: 18.36 km/h (OZO)']}
              condition="Bewolkt"
              forecast={[['storm', 27, 16], ['rainy', 23, 14], ['cloudy', 24, 11], ['cloudy', 25, 12], ['cloudy', 24, 13]]}
            />
            <WeatherCard
              place="Pomorie"
              temp="26"
              attributes={['Luchtdruk: 1013 hPa', 'Vochtigheid: 52 %', 'Windsnelheid: 7 km/h (WNW)']}
              condition="Zonnig"
              forecast={[['sunny', 29, 23], ['sunny', 30, 21], ['sunny', 32, 17], ['sunny', 32, 19], ['sunny', 31, 19]]}
            />
          </Column>
          <Column>
            <WindCard />
          </Column>
        </Columns>
      </Main>
    </Page>
  );
}
